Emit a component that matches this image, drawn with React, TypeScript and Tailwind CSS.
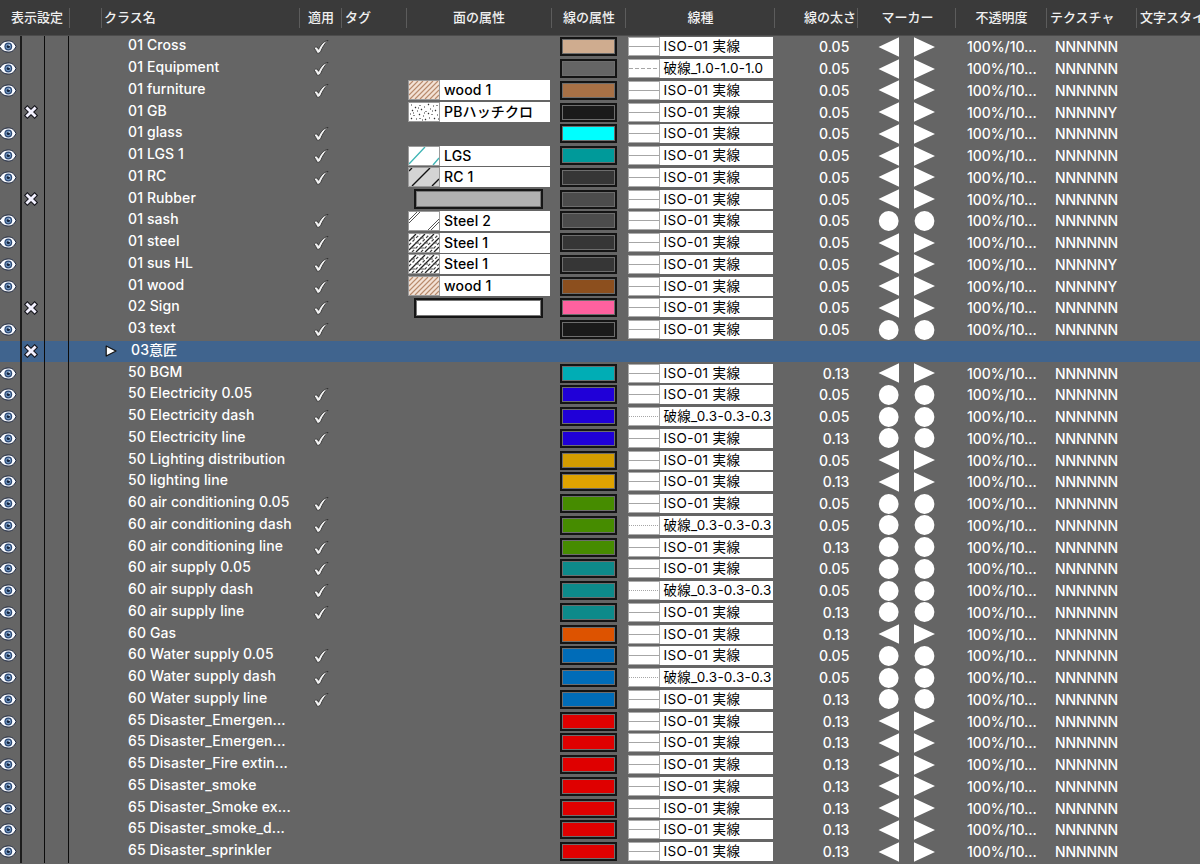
import React from 'react'
import clsx from 'clsx'

type Face = 'wood' | 'pb' | 'lgs' | 'rc' | 'steel1' | 'steel2'
type Marker = 'arrow' | 'circle'

interface ClassRow {
  name: string
  hidden?: boolean
  applied?: boolean
  face?: Face
  fill?: string
  color: string
  line?: string
  weight?: string
  marker?: Marker
  texture?: string
}

const DASH = '破線_0.3-0.3-0.3'

const rows: ClassRow[] = [
  { name: '01 Cross', applied: true, color: '#cfac8f' },
  { name: '01 Equipment', applied: true, color: '#656565', line: '破線_1.0-1.0-1.0' },
  { name: '01 furniture', applied: true, face: 'wood', color: '#a87146' },
  { name: '01 GB', hidden: true, face: 'pb', color: '#1a1a1a', texture: 'NNNNNY' },
  { name: '01 glass', applied: true, color: '#00ffff' },
  { name: '01 LGS 1', applied: true, face: 'lgs', color: '#009a9a' },
  { name: '01 RC', applied: true, face: 'rc', color: '#363636' },
  { name: '01 Rubber', hidden: true, fill: '#b1b1b1', color: '#4c4c4c' },
  { name: '01 sash', applied: true, face: 'steel2', color: '#4c4c4c', marker: 'circle' },
  { name: '01 steel', applied: true, face: 'steel1', color: '#363636' },
  { name: '01 sus HL', applied: true, face: 'steel1', color: '#363636', texture: 'NNNNNY' },
  { name: '01 wood', applied: true, face: 'wood', color: '#8c4f1e', texture: 'NNNNNY' },
  { name: '02 Sign', hidden: true, applied: true, fill: '#ffffff', color: '#ff619f' },
  { name: '03 text', applied: true, color: '#1a1a1a', marker: 'circle' },
  { name: '03意匠', hidden: true, color: '' },
  { name: '50 BGM', color: '#00adb5', weight: '0.13' },
  { name: '50 Electricity 0.05', applied: true, color: '#2000d8', marker: 'circle' },
  { name: '50 Electricity dash', applied: true, color: '#2000d8', line: DASH, marker: 'circle' },
  { name: '50 Electricity line', applied: true, color: '#2000d8', weight: '0.13', marker: 'circle' },
  { name: '50 Lighting distribution', color: '#d39c00' },
  { name: '50 lighting line', color: '#dfa300', weight: '0.13' },
  { name: '60 air conditioning 0.05', applied: true, color: '#468c00', marker: 'circle' },
  { name: '60 air conditioning dash', applied: true, color: '#468c00', line: DASH, marker: 'circle' },
  { name: '60 air conditioning line', applied: true, color: '#468c00', weight: '0.13', marker: 'circle' },
  { name: '60 air supply 0.05', applied: true, color: '#0d8a8a', marker: 'circle' },
  { name: '60 air supply dash', applied: true, color: '#0d8a8a', line: DASH, marker: 'circle' },
  { name: '60 air supply line', applied: true, color: '#0d8a8a', weight: '0.13', marker: 'circle' },
  { name: '60 Gas', color: '#dd5300', weight: '0.13' },
  { name: '60 Water supply 0.05', applied: true, color: '#006cb8', marker: 'circle' },
  { name: '60 Water supply dash', applied: true, color: '#006cb8', line: DASH, marker: 'circle' },
  { name: '60 Water supply line', applied: true, color: '#006cb8', weight: '0.13', marker: 'circle' },
  { name: '65 Disaster_Emergen...', color: '#df0000', weight: '0.13' },
  { name: '65 Disaster_Emergen...', color: '#df0000', weight: '0.13' },
  { name: '65 Disaster_Fire extin...', color: '#df0000', weight: '0.13' },
  { name: '65 Disaster_smoke', color: '#df0000', weight: '0.13' },
  { name: '65 Disaster_Smoke ex...', color: '#df0000', weight: '0.13' },
  { name: '65 Disaster_smoke_d...', color: '#df0000', weight: '0.13' },
  { name: '65 Disaster_sprinkler', color: '#df0000', weight: '0.13' },
]

const faceLabels: Record<Face, string> = {
  wood: 'wood 1',
  pb: 'PBハッチクロ',
  lgs: 'LGS',
  rc: 'RC 1',
  steel1: 'Steel 1',
  steel2: 'Steel 2',
}

function EyeIcon() {
  return (
    <svg className="block h-[15px] w-[17px] shrink-0" viewBox="0 0 17 15">
      <path d="M-.5 7.5C2 3.200 5 2 8.300 2S14 3.200 16 7.500C14 11.800 11.600 13 8.300 13S2 11.800-.5 7.500Z" fill="#fbfcff" stroke="#1c2740" strokeWidth="1" />
      <circle cx="8.300" cy="7.500" r="3.900" fill="#2d4a76" />
      <circle cx="8.300" cy="7.500" r="2.700" fill="#6f93be" />
      <circle cx="8.300" cy="7.500" r="1.600" fill="#16253f" />
      <circle cx="9.200" cy="6.300" r=".8" fill="#dce8f5" />
    </svg>
  )
}

function CrossIcon() {
  return (
    <svg className="block h-[14px] w-[14px] shrink-0" viewBox="0 0 14 14" strokeLinecap="square">
      <path d="M3.400 3.400l7.200 7.200M10.600 3.400l-7.200 7.200" stroke="#15151c" strokeWidth="4.900" />
      <path d="M3.400 3.400l7.200 7.200M10.600 3.400l-7.200 7.200" stroke="#f3f1ff" strokeWidth="2.800" />
    </svg>
  )
}

function CheckIcon() {
  return (
    <svg className="block h-4 w-4 shrink-0" viewBox="0 0 16 16">
      <path d="M1.200 9.200Q2.800 7.200 4.300 8.200L5.500 10.300C7.500 6 10.500 2.200 15 1.400 11.600 4.400 9.300 8.500 7.600 12.800Q6 15 4 14.200C3.200 12.300 2.500 10.500 1.200 9.200Z" fill="#f1f1f1" stroke="#303030" strokeWidth=".9" strokeLinejoin="round" />
    </svg>
  )
}

function Expander() {
  return (
    <svg className="block h-3 w-3 shrink-0" viewBox="0 0 12 12">
      <path d="M1.200 1L11 6 1.200 11Z" fill="#fff" stroke="#111" strokeWidth="1.200" strokeLinejoin="round" />
    </svg>
  )
}

// Tiny hatch previews shown left of the fill name
function Hatch({ face }: { face: Face }) {
  return (
    <svg className="block h-[20px] w-8 shrink-0" viewBox="0 0 32 20" fill="none">
      <rect x=".5" y=".5" width="31" height="19" fill={face === 'wood' ? '#f3e2d6' : face === 'rc' ? '#d4d4d4' : '#fff'} />
      {face === 'wood' && (
        <path d="M1 5l4-4M1 10l9-9M1 15l14-14M2 19L20 1M7 19L25 1M12 19L30 1M17 19L31 5M22 19l9-9M27 19l4-4" stroke="#b98b6c" strokeWidth="1.100" />
      )}
      {face === 'pb' && (
        <path d="M3 3h1M7 5l1 1M12 3v1M16 5h1M20 2l1 1M25 4h1M29 3v1M4 8l1 1M9 9h1M13 8l1-1M18 9v1M22 7h1M27 8l1 1M2 12h1M6 13v1M11 12l1 1M15 14h1M20 12l1-1M24 12v1M29 13h1M3 17l1-1M8 17h1M12 16v1M17 17l1 1M21 16h1M26 17l1-1M30 17h1M10 6h1M24 9h1M16 11h1M5 11h1M14 18h1" stroke="#333" strokeWidth="1.100" />
      )}
      {face === 'lgs' && <path d="M1 18L17 1M25 19l6-7" stroke="#3fb5b5" strokeWidth="1.300" />}
      {face === 'rc' && <path d="M1 4l3-3M4 19L22 1M24 19l7-7" stroke="#111" strokeWidth="1.400" />}
      {face === 'steel2' && <path d="M1 9l8-8M1 12L12 1M20 19L31 8M23 19l8-8" stroke="#555" strokeWidth="1" />}
      {face === 'steel1' && (
        <>
          <path d="M1 8l7-7M1 17L17 1M8 19L26 1M17 19L31 5M26 19l5-5" stroke="#222" strokeWidth="1.300" />
          <path d="M1 12L12 1M4 19L22 1M13 19L31 1M22 19l9-9" stroke="#444" strokeWidth="1.200" strokeDasharray="3 2" />
          <path d="M3 5h4M12 5h4M21 5h4M7 10h4M16 10h4M25 10h4M3 15h4M12 15h4M21 15h4" stroke="#555" strokeWidth="1" />
        </>
      )}
      <rect x=".5" y=".5" width="31" height="19" stroke="#9b9b9b" />
    </svg>
  )
}

function FaceCell({ row }: { row: ClassRow }) {
  if (row.face) {
    return (
      <div className="flex h-5 w-[142px] items-center bg-white">
        <Hatch face={row.face} />
        <span className="pl-1 text-[14px] leading-5 tracking-[0.15px] text-black">{faceLabels[row.face]}</span>
      </div>
    )
  }
  if (row.fill) {
    return (
      <div className="ml-[6px] h-[20px] w-[129px] border-2 border-[#161616] bg-[#777] p-px">
        <div className="h-full" style={{ backgroundColor: row.fill }} />
      </div>
    )
  }
  return null
}

function LineCell({ line = 'ISO-01 実線' }: { line?: string }) {
  const solid = line.startsWith('ISO')
  return (
    <div className="flex h-[19px] w-[145px] items-center bg-white">
      <svg className="block h-[19px] w-8 shrink-0" viewBox="0 0 32 19" fill="none">
        <rect x=".5" y=".5" width="31" height="18" stroke="#aaa" />
        <path
          d="M1 9.500h30"
          stroke="#a6a6a6"
          strokeDasharray={solid ? undefined : line === DASH ? '1 1' : '4 2'}
        />
      </svg>
      <span
        className={clsx(
          'pl-[3.5px] text-[13.5px] leading-[19px] whitespace-nowrap text-black',
          solid ? 'tracking-[0.35px]' : 'tracking-[0.22px]'
        )}
      >
        {line}
      </span>
    </div>
  )
}

function MarkerCell({ marker = 'arrow' }: { marker?: Marker }) {
  return (
    <svg className="block h-[20px] w-[58px]" viewBox="0 0 58 20" fill="#fff">
      {marker === 'circle' ? (
        <>
          <circle cx="10.700" cy="10" r="9.900" />
          <circle cx="46.500" cy="10" r="9.900" />
        </>
      ) : (
        <path d="M.5 10L21 .3v19.400ZM57 10L36 .3v19.400Z" />
      )}
    </svg>
  )
}

const headers = [
  { label: '表示設定', className: 'w-[70px] pl-[11px]' },
  { label: '', className: 'w-8' },
  { label: 'クラス名', className: 'w-[198px] pl-[2px]' },
  { label: '適用', className: 'w-[42px] pl-[8px]' },
  { label: 'タグ', className: 'w-[65px] pl-[3px]' },
  { label: '面の属性', className: 'w-[145px] justify-center' },
  { label: '線の属性', className: 'w-[74px] justify-center pl-px' },
  { label: '線種', className: 'w-[149px] justify-center pl-px' },
  { label: '線の太さ', className: 'w-[83px] justify-end pr-px' },
  { label: 'マーカー', className: 'w-[98px] justify-center pl-[2px]' },
  { label: '不透明度', className: 'w-[91px] justify-center pl-px' },
  { label: 'テクスチャ', className: 'w-[90px] pl-[3px]' },
]

function Header() {
  return (
    <div className="flex h-[36px] shrink-0 items-center border-b border-[#4c4c4c] bg-[#3a3a3a] text-[13px] font-medium text-[#f0f0f0]">
      {headers.map((h, i) => (
        <div key={i} className={clsx('flex h-5 shrink-0 items-center border-r border-[#5c5c5c] whitespace-nowrap', h.className)}>
          {h.label}
        </div>
      ))}
      <div className="pl-[3px] whitespace-nowrap">文字スタイル</div>
    </div>
  )
}

function Row({ row }: { row: ClassRow }) {
  const isGroup = !row.color
  return (
    <div className={clsx('flex h-[21.757px] shrink-0 items-center text-[14px] font-[450] text-white', isGroup && 'bg-[#40648e]')}>
      <div className="flex h-full w-[22px] shrink-0 items-center border-r-2 border-[#1c1c1c]">
        {!row.hidden && <EyeIcon />}
      </div>
      <div className="flex h-full w-[23px] shrink-0 items-center justify-center border-r border-[#0c0c0c] pr-1">
        {row.hidden && <CrossIcon />}
      </div>
      <div className="h-full w-6 shrink-0 border-r border-[#0c0c0c]" />
      <div className="flex h-full w-[230px] shrink-0 items-center">
        <div className="flex w-[59px] shrink-0 justify-end pr-[11px]">{isGroup && <Expander />}</div>
        <span className={clsx('pb-[3px] leading-[18px] tracking-[0.1px] whitespace-nowrap', isGroup && 'pl-[3px]')}>{row.name}</span>
      </div>
      <div className="flex w-[42px] shrink-0 justify-center pt-px pl-px">{row.applied && <CheckIcon />}</div>
      {!isGroup && (
        <>
          <div className="ml-[67px] w-[152px] shrink-0">
            <FaceCell row={row} />
          </div>
          <div className="w-[68px] shrink-0">
            <div className="h-[19px] w-[57px] border-2 border-[#141414] bg-[#6d6d6d] p-px">
              <div className="h-full" style={{ backgroundColor: row.color }} />
            </div>
          </div>
          <div className="shrink-0 font-normal">
            <LineCell line={row.line} />
          </div>
          <div className="w-[76.5px] shrink-0 text-right tracking-[0.1px]">{row.weight ?? '0.05'}</div>
          <div className="ml-[28.5px] w-[89px] shrink-0">
            <MarkerCell marker={row.marker} />
          </div>
          <div className="w-[88px] shrink-0 tracking-[-0.05px]">100%/10...</div>
          <div className="tracking-[-0.1px]">{row.texture ?? 'NNNNNN'}</div>
        </>
      )}
    </div>
  )
}

export default function App() {
  return (
    <div className="flex h-[864px] w-[1200px] flex-col overflow-hidden bg-[#656565] font-['Inter','Noto_Sans_CJK_JP',sans-serif]">
      <Header />
      <div className="flex flex-col">
        {rows.map((row, i) => (
          <Row key={i} row={row} />
        ))}
      </div>
    </div>
  )
}
